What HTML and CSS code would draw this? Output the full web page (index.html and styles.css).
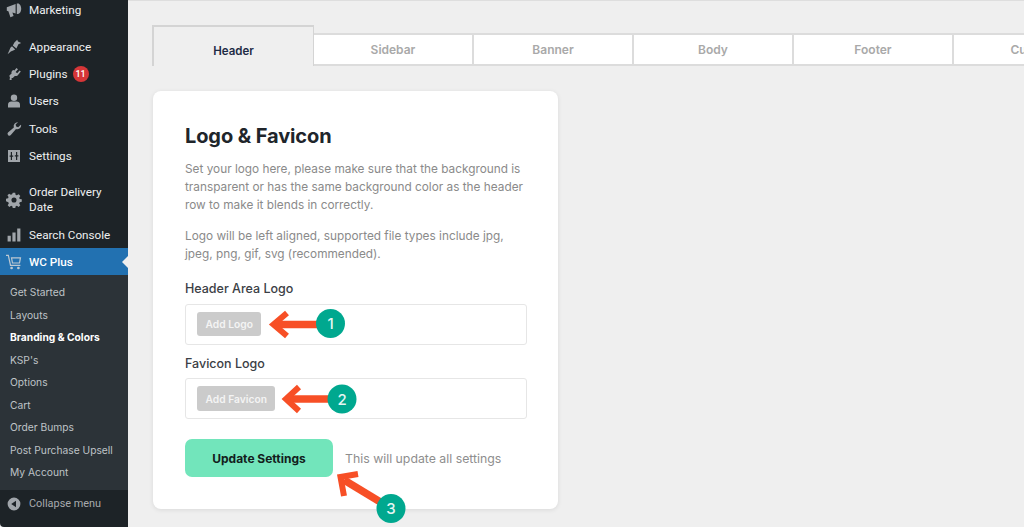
FILE: index.html
```html
<!DOCTYPE html>
<html lang="en">
<head>
<meta charset="utf-8">
<title>WC Plus – Branding &amp; Colors</title>
<link rel="stylesheet" href="styles.css">
</head>
<body>
<div class="app">
  <aside class="sidebar">
    <nav class="menu">
      <a class="item item-first"><svg class="ico" viewBox="0 0 20 20"><path d="M1 6.500 12 2.500v12L8 13l1.500 4.500-4 1.500L3 11.500l-2-.5zM13.500 2h1.500c2 0 4 3 4 6.500S17 15 15 15h-1.500z"/></svg><span>Marketing</span></a>
      <a class="item item-gap"><svg class="ico" viewBox="0 0 20 20"><path d="M10.500 4.500 14 1l1 2 4 2-3.500 1.500L13 12l-4.500-4zM7.500 9l4 4-2.500 1.500-3 1L2 19l2.500-5.500 1-2.500z"/></svg><span>Appearance</span></a>
      <a class="item"><svg class="ico" viewBox="0 0 20 20"><path d="M13 2.500l2 1.500-3 3.500 2 1.500 3-3.500 1.500 1.500-3 3.500c-1 1.500-2.500 2.500-4.500 2l-2.500 2.500H7v2.500H4.500l.5-4.500-1 .5.500-2 2.500-2c-.5-1.500 0-3 1-4L9.500 5l1 .5z"/></svg><span>Plugins</span><b class="badge">11</b></a>
      <a class="item"><svg class="ico" viewBox="0 0 20 20"><circle cx="10" cy="6" r="4"/><path d="M2.500 18v-3.500c0-2.500 2-4 4-4h7c2 0 4 1.500 4 4V18z"/></svg><span>Users</span></a>
      <a class="item"><svg class="ico" viewBox="0 0 20 20"><path d="M19 5.500a5 5 0 0 1-6.500 4.500L6 17.500a2.300 2.300 0 0 1-3.500-3l7.300-6.500A5 5 0 0 1 15 1.500l-3 3 .7 2.500 2.500.7 3.300-3z"/></svg><span>Tools</span></a>
      <a class="item"><svg class="ico" viewBox="0 0 20 20"><path fill-rule="evenodd" d="M2.500 2.500h15v15h-15zM6 5v4.500H4.500V11H6v4h1.500v-4H9V9.500H7.500V5zM12.500 5v4H11v1.500h1.500V15H14v-4.500h1.500V9H14V5z"/></svg><span>Settings</span></a>
      <a class="item item-tall"><svg class="ico" viewBox="0 0 20 20"><path fill-rule="evenodd" d="M8.500 1h3l.6 2.600 1.500.6 2.200-1.400 2.100 2.100-1.400 2.200.6 1.500 2.600.6v3l-2.600.6-.6 1.500 1.400 2.200-2.100 2.100-2.200-1.400-1.500.6-.6 2.600h-3l-.6-2.600-1.500-.6-2.200 1.400-2.100-2.100 1.400-2.200-.6-1.500L0 11.500v-3l2.600-.6.6-1.500L1.800 4.200l2.100-2.100 2.200 1.400 1.500-.6zM10 6.800a3.200 3.200 0 1 0 0 6.400 3.200 3.200 0 0 0 0-6.400z"/></svg><span>Order Delivery Date</span></a>
      <a class="item"><svg class="ico" viewBox="0 0 20 20"><path d="M2 11h4v7H2zM8 7h4v11H8zM14 2h4v16h-4z"/></svg><span>Search Console</span></a>
      <a class="item item-current"><svg class="ico" viewBox="0 0 20 20"><path fill-rule="evenodd" d="M0 1h3.500l2.800 12.500H18V15H5L2.300 2.500H0zM6 4h13l-1.500 8H7.500zM7.800 5.500l.9 5h7.600l.8-5z"/><circle cx="7" cy="17.500" r="1.700"/><circle cx="15.500" cy="17.500" r="1.700"/></svg><span>WC Plus</span></a>
    </nav>
    <ul class="submenu">
      <li>Get Started</li>
      <li>Layouts</li>
      <li class="sub-current">Branding &amp; Colors</li>
      <li>KSP's</li>
      <li>Options</li>
      <li>Cart</li>
      <li>Order Bumps</li>
      <li>Post Purchase Upsell</li>
      <li>My Account</li>
    </ul>
    <div class="collapse">
      <svg class="ico" viewBox="0 0 20 20"><path fill-rule="evenodd" d="M10 2a8 8 0 1 1 0 16 8 8 0 0 1 0-16zM12.500 6 6.500 10l6 4z"/></svg>
      <span>Collapse menu</span>
    </div>
  </aside>
  <main class="main">
    <div class="tabs">
      <div class="tab tab-active">Header</div>
      <div class="tab">Sidebar</div>
      <div class="tab">Banner</div>
      <div class="tab">Body</div>
      <div class="tab">Footer</div>
      <div class="tab">Custom</div>
    </div>
    <section class="card">
      <h1>Logo &amp; Favicon</h1>
      <p class="desc">Set your logo here, please make sure that the background is transparent or has the same background color as the header row to make it blends in correctly.</p>
      <p class="desc desc-second">Logo will be left aligned, supported file types include jpg, jpeg, png, gif, svg (recommended).</p>
      <h2>Header Area Logo</h2>
      <div class="field"><button class="add">Add Logo</button></div>
      <h2 class="label-second">Favicon Logo</h2>
      <div class="field"><button class="add add-tall">Add Favicon</button></div>
      <div class="actions">
        <button class="update">Update Settings</button>
        <span class="note">This will update all settings</span>
      </div>
    </section>
  </main>
  <svg class="notes" viewBox="0 0 1024 527" aria-hidden="true">
    <g class="arrow">
      <path class="shaft" d="M320 324.500H276"/><path d="M287 313 273.500 324.500 287 336"/>
      <path class="shaft" d="M332 399H289"/><path d="M299 387 286 399 299 411"/>
      <path class="shaft" d="M382 503 344 480"/><path d="M358 474 340.500 477 344 496"/>
    </g>
    <circle class="dot" cx="330.500" cy="323.500" r="14.500"/>
    <circle class="dot" cx="342" cy="399" r="14.500"/>
    <circle class="dot" cx="391" cy="508.500" r="14.500"/>
    <text class="num" x="330.500" y="329">1</text>
    <text class="num" x="342" y="404.500">2</text>
    <text class="num" x="391" y="514">3</text>
  </svg>
</div>
</body>
</html>
```
FILE: styles.css
```css
* { box-sizing: border-box; }
html, body { margin: 0; height: 100%; overflow: hidden; }
body { font-family: Inter, "Liberation Sans", sans-serif; background: #efefef; }
.app { position: relative; display: flex; width: 1024px; height: 527px; overflow: hidden; }

.sidebar { width: 128px; height: 527px; flex: none; background: #1d2327; display: flex; flex-direction: column; border-bottom-left-radius: 4px; overflow: hidden; font-family: Roboto, "Liberation Sans", sans-serif; }
.menu { display: flex; flex-direction: column; }
.item { display: flex; align-items: center; height: 27.2px; padding-left: 6px; font-size: 11.700px; color: #eef0f1; position: relative; }
.item span { margin-left: 7px; }
.item-first { height: 20px; }
.item-gap { margin-top: 13.500px; }
.item-tall { height: 42px; margin-top: 9.500px; line-height: 15px; }
.item-tall span { width: 88px; }
.item-current { height: 27px; background: #2271b1; color: #fff; font-weight: 500; }
.item-current::after { content: ""; position: absolute; right: 0; top: 8px; border: 6px solid transparent; border-right-color: #efefef; border-left: 0; }
.ico { width: 16px; height: 16px; flex: none; fill: #a0a5aa; }
.item-current .ico { fill: #bcc8d2; }
.badge { margin-left: 5px; width: 16px; height: 16px; border-radius: 50%; background: #d63638; color: #fff; font-size: 9px; font-weight: 500; display: flex; align-items: center; justify-content: center; }

.submenu { list-style: none; margin: 0; padding: 6px 0 0; background: #2c3338; height: 215px; }
.submenu li { height: 22.500px; padding-left: 10px; display: flex; align-items: center; font-family: Inter, sans-serif; font-size: 10.250px; color: #bfc3c7; }
.submenu .sub-current { color: #fff; font-weight: 700; }
.collapse { display: flex; align-items: center; padding: 0 0 0 6px; height: 27px; font-size: 10.900px; color: #a7aaad; }
.collapse span { margin-left: 7px; }

.main { flex: 1; min-width: 0; border-top: 1px solid #dedede; padding: 24px 0 0 24px; overflow: hidden; }
.tabs { display: flex; align-items: flex-end; height: 41px; }
.tab { width: 160px; height: 33px; flex: none; background: #fff; border: 2px solid #dcdcdc; border-left-width: 0; display: flex; align-items: center; justify-content: center; font-size: 12px; font-weight: 600; color: #a9a9a9; }
.tab-active { width: 162px; height: 41px; background: #efefef; color: #1d2b45; border: 2px solid #d4d4d4; border-bottom: 0; padding-top: 8px; border-right-width: 1px; font-size: 11.500px; }

.card { width: 405px; height: 418px; margin: 25px 0 0 1px; background: #fff; border-radius: 8px; box-shadow: 0 1px 5px rgba(0, 0, 0, .09); padding: 32px 32px 0; }
h1 { margin: 0; font-size: 20px; line-height: 26px; font-weight: 700; color: #20252b; letter-spacing: -.1px; }
.desc { margin: 11px 0 0; font-size: 11.820px; line-height: 18px; color: #8a8a8a; }
.desc-second { margin-top: 13px; }
h2 { margin: 16px 0 0; font-size: 12.500px; line-height: 20px; font-weight: 500; color: #3b4045; }
.label-second { margin-top: 9px; }
.label-second + .field { margin-top: 4px; }
.field { margin-top: 5px; width: 342px; height: 41px; border: 1px solid #e6e6e6; border-radius: 3px; padding: 7px 11px; }
.add { display: block; height: 24px; padding: 0 8.500px; border: 0; border-radius: 3px; background: #cbcbcb; color: #f4f4f4; font: 600 10.250px Inter, sans-serif; }
.add-tall { height: 25px; }
.actions { display: flex; align-items: center; gap: 12px; margin-top: 20px; }
.update { width: 148px; height: 38px; border: 0; border-radius: 7px; background: #72e5bb; color: #12201c; font: 700 12px Inter, sans-serif; }
.note { font-size: 12.300px; color: #8e8e8e; }

.notes { position: absolute; left: 0; top: 0; width: 1024px; height: 527px; pointer-events: none; }
.arrow { fill: none; stroke: #f74f26; stroke-width: 6; stroke-miterlimit: 6; }
.arrow .shaft { stroke-width: 7.500; }
.dot { fill: #00a88f; }
.num { font: 500 15px Inter, sans-serif; fill: #e6f6f3; text-anchor: middle; }
```
